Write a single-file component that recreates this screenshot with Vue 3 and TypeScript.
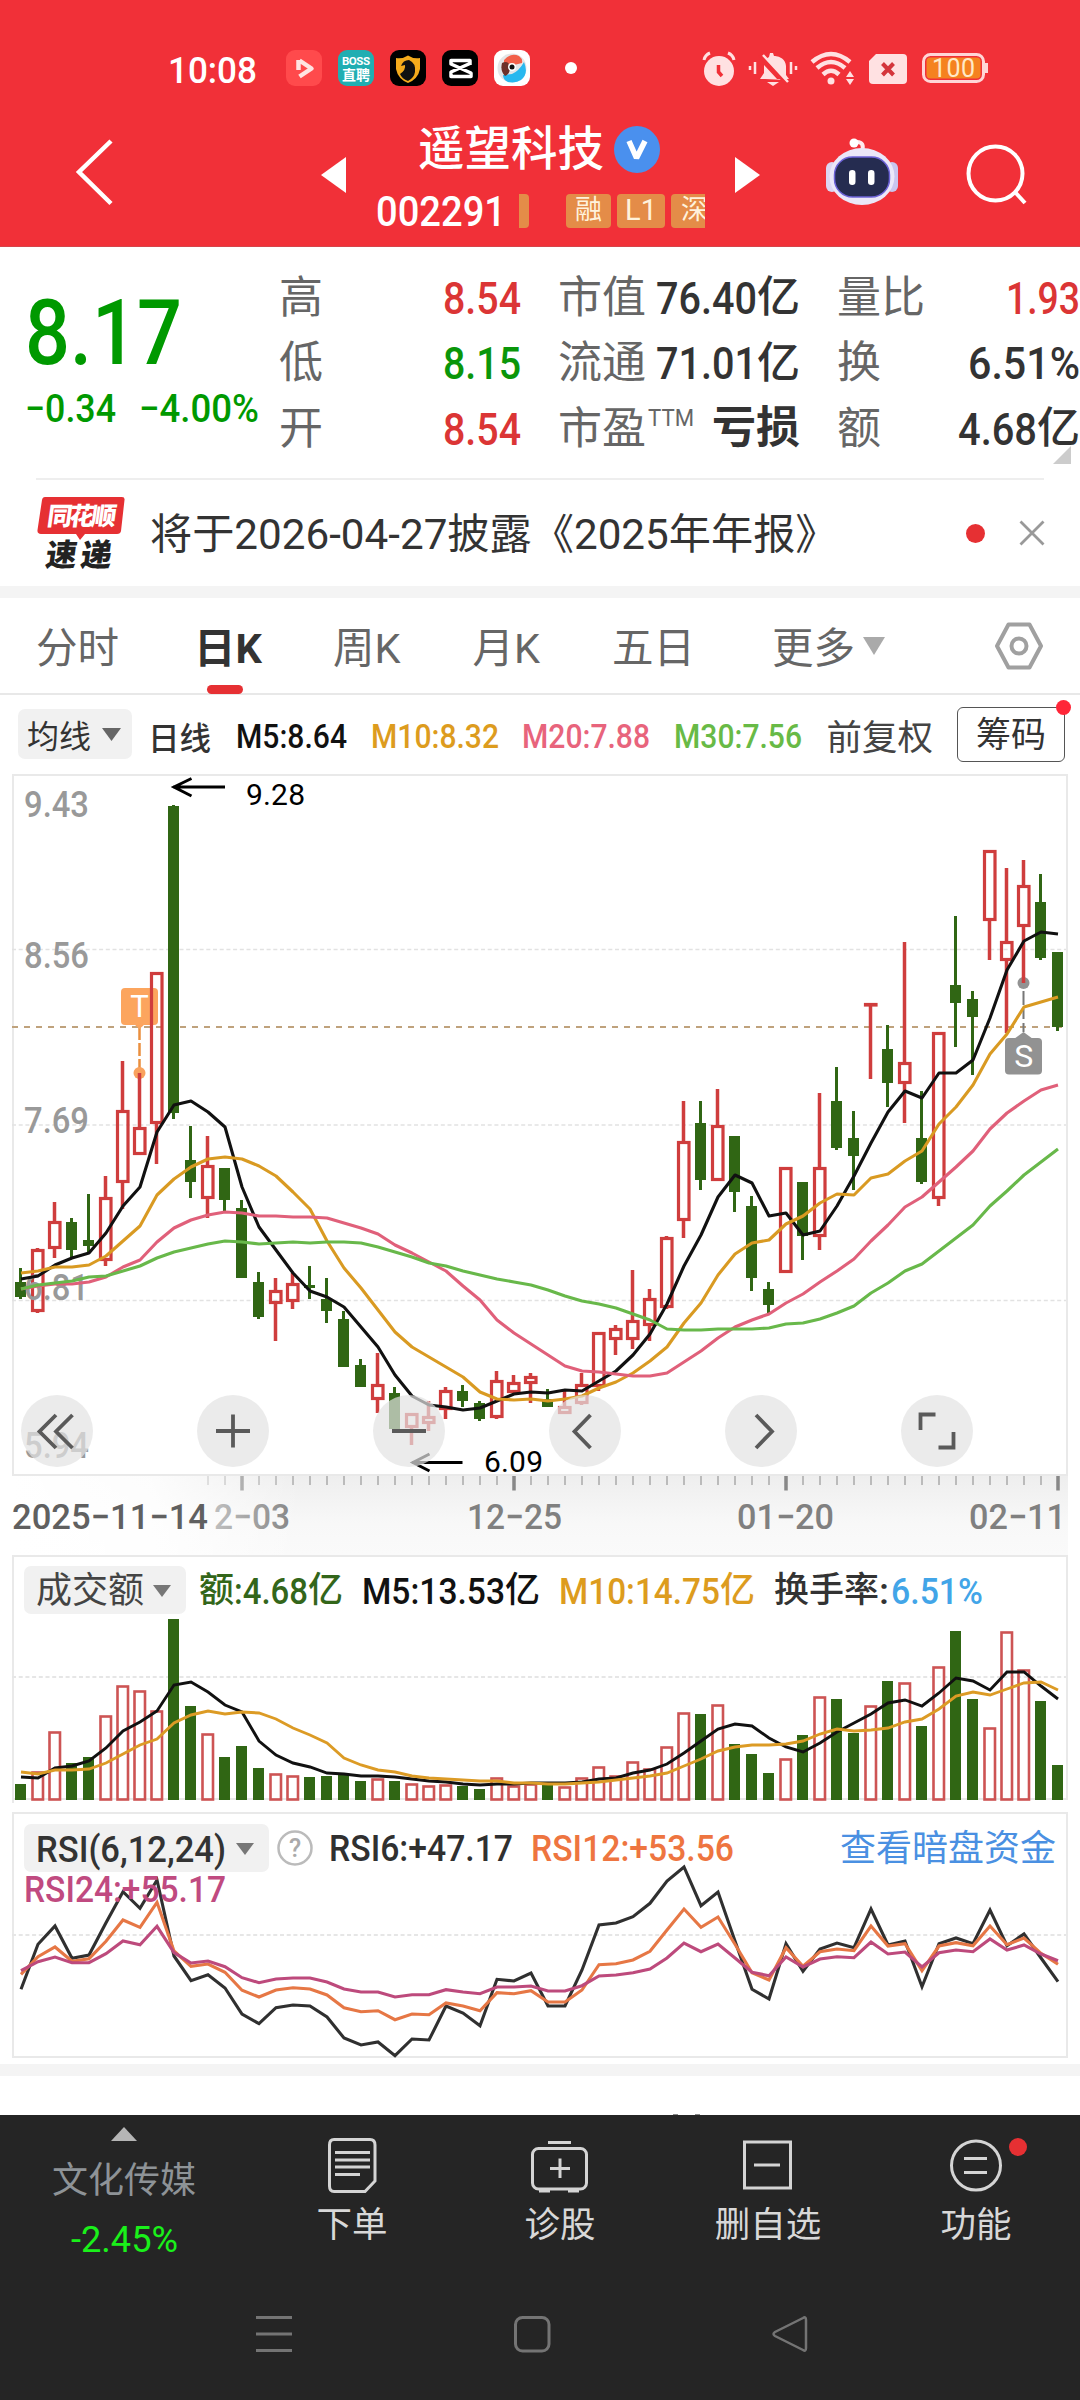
<script setup lang="ts">
import { h } from 'vue'
import type { FunctionalComponent } from 'vue'

/* Numeric text condensed to an exact width; the box height equals the cap height. */
const Num: FunctionalComponent<{ t: string; w: number; s: number }> = (p) =>
  h(
    'svg',
    { width: p.w, height: p.s * 0.71, style: 'display:block;overflow:visible;flex:none' },
    [
      h(
        'text',
        {
          x: 0,
          y: p.s * 0.71,
          'font-size': p.s,
          textLength: p.w,
          lengthAdjust: 'spacingAndGlyphs',
          fill: 'currentColor',
        },
        p.t,
      ),
    ],
  )
Num.props = ['t', 'w', 's']

type Candle = [string, number, number, number, number]
const candles: Candle[] = [
  ['g', 1268, 1282, 1297, 1299], ['r', 1248, 1249, 1312, 1313], ['r', 1202, 1221, 1249, 1258],
  ['g', 1218, 1222, 1250, 1257], ['g', 1194, 1240, 1246, 1252], ['r', 1176, 1197, 1261, 1266],
  ['r', 1061, 1110, 1183, 1209], ['r', 1073, 1127, 1155, 1155], ['r', 972, 972, 1124, 1164],
  ['g', 805, 806, 1113, 1119], ['g', 1126, 1160, 1182, 1198], ['r', 1136, 1165, 1199, 1218],
  ['g', 1168, 1168, 1200, 1211], ['g', 1200, 1208, 1278, 1278], ['g', 1272, 1282, 1317, 1319],
  ['r', 1278, 1290, 1304, 1341], ['r', 1273, 1283, 1302, 1309], ['g', 1266, 1285, 1288, 1299],
  ['g', 1278, 1299, 1311, 1323], ['g', 1311, 1319, 1367, 1367], ['g', 1359, 1365, 1387, 1387],
  ['r', 1353, 1384, 1400, 1413], ['g', 1387, 1393, 1429, 1429], ['r', 1413, 1413, 1428, 1445],
  ['r', 1401, 1416, 1424, 1431], ['r', 1387, 1390, 1410, 1419], ['g', 1385, 1391, 1401, 1407],
  ['g', 1401, 1403, 1419, 1421], ['r', 1371, 1380, 1418, 1419], ['r', 1375, 1382, 1393, 1393],
  ['r', 1373, 1376, 1384, 1403], ['g', 1389, 1399, 1407, 1407], ['r', 1391, 1406, 1414, 1414],
  ['r', 1373, 1384, 1404, 1405], ['r', 1332, 1332, 1387, 1391], ['r', 1325, 1328, 1340, 1355],
  ['r', 1270, 1320, 1340, 1349], ['r', 1289, 1298, 1326, 1341], ['r', 1236, 1237, 1308, 1309],
  ['r', 1101, 1141, 1221, 1238], ['g', 1101, 1123, 1180, 1190], ['r', 1089, 1125, 1181, 1181],
  ['g', 1136, 1136, 1192, 1212], ['g', 1196, 1206, 1278, 1291], ['g', 1282, 1289, 1305, 1313],
  ['r', 1167, 1167, 1273, 1273], ['g', 1182, 1182, 1236, 1260], ['r', 1093, 1167, 1237, 1250],
  ['g', 1067, 1101, 1148, 1150], ['g', 1111, 1138, 1156, 1190], ['r', 1003, 1003, 1006, 1079],
  ['g', 1025, 1049, 1083, 1107], ['r', 942, 1062, 1084, 1123], ['g', 1091, 1138, 1182, 1184],
  ['r', 1032, 1032, 1199, 1206], ['g', 916, 985, 1003, 1047], ['g', 991, 999, 1017, 1075],
  ['r', 850, 850, 921, 960], ['r', 868, 941, 961, 1033], ['r', 860, 885, 927, 983],
  ['g', 874, 902, 958, 960], ['g', 952, 952, 1027, 1031],
]

const ma5 = [1279, 1276, 1265, 1258, 1253, 1233, 1206, 1187, 1132, 1105, 1101, 1112, 1127, 1187, 1227, 1250, 1273, 1291, 1297, 1307, 1327, 1347, 1375, 1396, 1405, 1407, 1410, 1408, 1401, 1394, 1392, 1393, 1390, 1391, 1381, 1371, 1355, 1334, 1304, 1266, 1235, 1197, 1175, 1183, 1216, 1213, 1235, 1231, 1206, 1176, 1143, 1112, 1091, 1098, 1073, 1073, 1060, 1018, 970, 941, 932, 934]
const ma10 = [1273, 1271, 1267, 1267, 1265, 1256, 1241, 1226, 1195, 1179, 1167, 1159, 1157, 1159, 1166, 1176, 1192, 1209, 1241, 1268, 1288, 1310, 1332, 1347, 1357, 1367, 1377, 1392, 1399, 1400, 1399, 1401, 1399, 1396, 1388, 1382, 1373, 1361, 1347, 1323, 1303, 1275, 1254, 1243, 1240, 1224, 1216, 1203, 1194, 1195, 1178, 1174, 1161, 1151, 1124, 1107, 1085, 1054, 1034, 1007, 1002, 997]
const ma20 = [1289, 1286, 1284, 1284, 1282, 1277, 1267, 1260, 1242, 1228, 1220, 1215, 1212, 1213, 1216, 1216, 1217, 1217, 1218, 1223, 1228, 1234, 1245, 1253, 1262, 1271, 1286, 1300, 1320, 1333, 1344, 1355, 1366, 1371, 1372, 1374, 1376, 1376, 1373, 1362, 1351, 1338, 1327, 1320, 1314, 1303, 1294, 1282, 1271, 1259, 1241, 1225, 1207, 1197, 1182, 1167, 1151, 1129, 1113, 1101, 1090, 1085]
const ma30 = [1289, 1285, 1283, 1281, 1277, 1276, 1271, 1266, 1258, 1252, 1248, 1244, 1241, 1242, 1244, 1243, 1242, 1243, 1242, 1242, 1243, 1247, 1252, 1257, 1263, 1266, 1271, 1275, 1279, 1282, 1285, 1290, 1296, 1301, 1304, 1308, 1314, 1320, 1329, 1330, 1330, 1329, 1329, 1329, 1328, 1324, 1323, 1319, 1313, 1306, 1293, 1283, 1271, 1264, 1251, 1238, 1225, 1206, 1191, 1175, 1162, 1149]

const volTops = [1784, 1771, 1731, 1763, 1757, 1715, 1685, 1690, 1710, 1619, 1706, 1733, 1757, 1746, 1768, 1773, 1775, 1777, 1776, 1775, 1781, 1778, 1781, 1783, 1785, 1784, 1786, 1789, 1777, 1785, 1783, 1785, 1786, 1777, 1766, 1775, 1761, 1768, 1746, 1712, 1714, 1704, 1744, 1754, 1773, 1758, 1735, 1696, 1699, 1733, 1705, 1681, 1682, 1726, 1666, 1631, 1699, 1727, 1631, 1669, 1701, 1765]
const volMa5 = [1777, 1778, 1768, 1766, 1761, 1748, 1731, 1722, 1711, 1685, 1682, 1692, 1705, 1712, 1741, 1755, 1763, 1767, 1773, 1774, 1776, 1776, 1777, 1779, 1781, 1782, 1784, 1785, 1784, 1784, 1783, 1783, 1783, 1782, 1779, 1778, 1773, 1770, 1764, 1753, 1741, 1729, 1724, 1726, 1738, 1747, 1752, 1743, 1732, 1723, 1714, 1703, 1700, 1706, 1693, 1678, 1681, 1690, 1672, 1672, 1686, 1699]
const volMa10 = [1772, 1774, 1770, 1770, 1769, 1763, 1754, 1745, 1739, 1723, 1715, 1711, 1714, 1712, 1713, 1719, 1728, 1735, 1743, 1758, 1765, 1770, 1772, 1776, 1778, 1779, 1780, 1781, 1781, 1783, 1783, 1784, 1784, 1783, 1782, 1780, 1778, 1776, 1773, 1766, 1759, 1751, 1747, 1745, 1745, 1744, 1741, 1734, 1729, 1731, 1730, 1728, 1722, 1719, 1709, 1696, 1692, 1695, 1689, 1683, 1682, 1690]

/* RSI samples are in thirds of a pixel below the top of the panel area. */
const rsi6 = [568, 433, 378, 475, 465, 368, 275, 325, 240, 468, 542, 524, 564, 642, 671, 623, 615, 618, 651, 714, 735, 726, 767, 717, 720, 618, 639, 677, 538, 543, 519, 618, 618, 510, 375, 369, 350, 310, 243, 201, 317, 276, 423, 568, 597, 431, 514, 447, 429, 443, 327, 435, 423, 560, 431, 414, 431, 330, 437, 402, 474, 545]
const rsi12 = [523, 470, 441, 484, 476, 424, 360, 382, 307, 453, 499, 492, 517, 571, 591, 570, 563, 567, 585, 623, 635, 632, 659, 642, 644, 609, 618, 632, 578, 581, 572, 606, 606, 570, 494, 491, 480, 454, 390, 327, 382, 351, 433, 518, 540, 443, 499, 455, 447, 452, 378, 438, 431, 512, 438, 428, 437, 378, 434, 414, 460, 493]
const rsi24 = [512, 485, 471, 488, 488, 461, 423, 434, 379, 458, 489, 483, 500, 533, 548, 537, 534, 534, 546, 567, 576, 576, 591, 584, 584, 569, 576, 581, 561, 561, 558, 573, 573, 557, 528, 525, 518, 507, 474, 429, 455, 432, 474, 517, 527, 471, 501, 477, 470, 473, 426, 462, 456, 501, 458, 450, 455, 417, 450, 435, 462, 482]

const cx = (i: number) => 20.5 + 17 * i
const line = (ys: number[]) => ys.map((y, i) => `${cx(i) + 0.5},${y}`).join(' ')
const rsiLine = (ys: number[]) => line(ys.map((v) => +(1800 + v / 3).toFixed(1)))

const maLines = [
  { c: '#111', p: line(ma5) },
  { c: '#d99a22', p: line(ma10) },
  { c: '#e0607a', p: line(ma20) },
  { c: '#68b84a', p: line(ma30) },
]
const scale = [
  { t: '9.43', y: 817 },
  { t: '8.56', y: 968 },
  { t: '7.69', y: 1133 },
  { t: '6.81', y: 1300 },
  { t: '5.94', y: 1458 },
]
const ticks = Array.from({ length: 51 }, (_, k) => k + 11)
const isMajor = (i: number) => i === 13 || i === 29 || i === 45 || i === 61
const buttons = [
  { x: 57, d: 'M56 1415L39.500 1431.500L56 1448M72.500 1415L56 1431.500L72.500 1448' },
  { x: 233, d: 'M216 1431H250M233 1414.500V1447.500' },
  { x: 409, d: 'M392 1431H426' },
  { x: 585, d: 'M590.500 1415L574.500 1431.500L590.500 1448' },
  { x: 761, d: 'M756 1415L772 1431.500L756 1448' },
  { x: 937, d: 'M935.500 1414.500H920.500V1430M953.500 1432V1447.500H938.500' },
]
const maLegend = [
  { t: 'M5:8.64', w: 111, m: 24.5, c: '#111' },
  { t: 'M10:8.32', w: 128, m: 24, c: '#dd9c1e' },
  { t: 'M20:7.88', w: 128, m: 23.5, c: '#e8647c' },
  { t: 'M30:7.56', w: 128, m: 23.5, c: '#68ba46' },
]
</script>

<template>
  <div class="phone">
    <header class="top">
      <div class="status">
        <Num class="clock" t="10:08" :w="89" :s="37" />
        <svg class="apps" width="300" height="40" viewBox="284 48 300 40">
          <rect x="286" y="50" width="36" height="36" rx="9" fill="#ff4a4c" />
          <path d="M298.500 60V70M299.500 60.500L311.500 68.500L299.500 76.500" fill="none" stroke="#ffe4e2" stroke-width="4.500" stroke-linejoin="round" />
          <rect x="338" y="50" width="36" height="36" rx="9" fill="#20aeb2" />
          <text x="356" y="65" font-size="11.500" font-weight="700" fill="#fff" text-anchor="middle" textLength="28">BOSS</text>
          <text x="356" y="80" font-size="14" font-weight="700" fill="#fff" text-anchor="middle">直聘</text>
          <rect x="390" y="50" width="36" height="36" rx="9" fill="#000" />
          <path d="M396 58Q403 59 408 55.500Q413 59 420 58V69Q418 79 408 83Q398 79 396 69Z" fill="#f5ab1c" />
          <path d="M400 74Q406 70 405 65L401 66Q403 60 409 60Q416 63 415 72Q414 78 408 81Q402 79 400 74Z" fill="#111" />
          <rect x="442" y="50" width="36" height="36" rx="9" fill="#000" />
          <path d="M470 65V60.500H451V64L471 73V76.500H451V72L471 63" fill="none" stroke="#fff" stroke-width="3.500" stroke-linejoin="round" />
          <rect x="494" y="50" width="36" height="36" rx="9" fill="#fff" />
          <circle cx="512" cy="68" r="14.500" fill="#e3e6e8" />
          <path d="M504 60Q511 52 519 56Q523 59 522 63L514 65Q507 62 504 66Z" fill="#f2604a" />
          <path d="M524 62Q529 74 521 80Q516 83.500 508 82Q503 80 503 75L512 74Q519 71 524 62Z" fill="#28b8ef" />
          <path d="M502 63Q508 60 510 66Q511 73 505 76Q500 71 502 63Z" fill="#6d3029" />
          <circle cx="512" cy="67" r="4" fill="#fff" /><circle cx="512" cy="67" r="2.500" fill="#111" />
          <circle cx="571" cy="68" r="6" fill="#fff" />
        </svg>
        <svg class="sys" width="290" height="40" viewBox="700 48 290 40">
          <g fill="#ffe1e2" stroke="none">
            <circle cx="719" cy="71" r="15" />
            <path d="M765 79H789L786 75V66A11 11 0 0 0 774 56L773 53H770L769 57L766 59L786 80ZM760 79L764 73V65L777 79Z" />
            <path d="M767 82H779L773 86Z" />
            <circle cx="831" cy="81" r="3.500" />
            <path d="M846 77L850 71L854 77ZM846 79L850 85L854 79Z" />
            <path d="M876 54H903A4 4 0 0 1 907 58V80A4 4 0 0 1 903 84H873A4 4 0 0 1 869 80V61Z" />
          </g>
          <path d="M704 60Q705 55 710 53M728 53Q733 55 734 60" fill="none" stroke="#ffe1e2" stroke-width="3" />
          <path d="M718.500 65V72L722 76" fill="none" stroke="#f13038" stroke-width="3.500" />
          <path d="M760 55L787 84" stroke="#f13038" stroke-width="4" />
          <path d="M763 55L788 82M750 66V70M755 62V74M791 62V74M796 66V70" fill="none" stroke="#ffe1e2" stroke-width="2.500" />
          <path d="M812 62Q831 46 850 62M817 68Q831 56 845 68M823 74.500Q831 67 839 74.500" fill="none" stroke="#ffe1e2" stroke-width="4.500" />
          <path d="M882.500 63.500L893.500 75M893.500 63.500L882.500 75" stroke="#d4353c" stroke-width="4" />
          <rect x="923.500" y="54.500" width="60" height="27" rx="7" fill="none" stroke="#ffd5d6" stroke-width="3" />
          <rect x="926.500" y="57.500" width="54" height="21" rx="4" fill="#f58220" />
          <path d="M986.500 63V73" stroke="#ffd5d6" stroke-width="3" />
          <text x="953.500" y="77" font-size="25" fill="#ffe9c8" text-anchor="middle" textLength="43">100</text>
        </svg>
      </div>
      <div class="titlebar">
        <svg class="back" width="50" height="74" viewBox="70 135 50 74"><path d="M111 141L79 172L111 203.500" fill="none" stroke="#fff" stroke-width="4.500" /></svg>
        <svg class="prev" width="25" height="36" viewBox="0 0 25 36"><path d="M25 0V36L0 18Z" fill="#fff" /></svg>
        <div class="name">
          <div class="name-row">
            <span class="title">遥望科技</span>
            <svg width="46" height="47" viewBox="0 0 46 47"><ellipse cx="23" cy="23.500" rx="23" ry="23.500" fill="#4a90ee" /><path d="M15 15L22.500 32L31 15" fill="none" stroke="#fff" stroke-width="5.500" stroke-linejoin="bevel" /></svg>
          </div>
          <div class="code-row">
            <Num class="code" t="002291" :w="130" :s="42.5" />
            <span class="tag sliver"></span>
            <span class="tag rong">融</span>
            <span class="tag lv">L1</span>
            <span class="tag shen">深</span>
          </div>
        </div>
        <svg class="next" width="25" height="36" viewBox="0 0 25 36"><path d="M0 0V36L25 18Z" fill="#fff" /></svg>
        <svg class="robot" width="76" height="72" viewBox="823 136 76 72">
          <path d="M861 152Q864 142 856 142" fill="none" stroke="#ffe9ee" stroke-width="4" />
          <circle cx="853" cy="143" r="4.500" fill="#fff" />
          <rect x="825" y="162" width="12" height="30" rx="6" fill="#dcd6f2" /><rect x="885" y="162" width="12" height="30" rx="6" fill="#c9c5ee" />
          <ellipse cx="861" cy="176.500" rx="32.500" ry="28.500" fill="#ebe7f8" />
          <rect x="833.500" y="157" width="55" height="40" rx="18" fill="#252c50" stroke="#6d63d8" stroke-width="1.500" />
          <rect x="848" y="170" width="6.500" height="15" rx="3.200" fill="#fff" /><rect x="867" y="170" width="6.500" height="15" rx="3.200" fill="#fff" />
        </svg>
        <svg class="search" width="66" height="66" viewBox="963 142 66 66"><circle cx="994.500" cy="173.500" r="27" fill="none" stroke="#fff" stroke-width="4" /><path d="M1014 192L1024 203" stroke="#fff" stroke-width="4" /></svg>
      </div>
    </header>

    <section class="quote">
      <div class="price">
        <Num class="last" t="8.17" :w="157" :s="91" />
        <div class="chg"><Num t="−0.34" :w="91" :s="39" /><Num t="−4.00%" :w="120" :s="39" /></div>
      </div>
      <div class="col">
        <div class="cell"><span>高</span><Num class="v up" t="8.54" :w="78" :s="45" /></div>
        <div class="cell"><span>低</span><Num class="v down" t="8.15" :w="78" :s="45" /></div>
        <div class="cell"><span>开</span><Num class="v up" t="8.54" :w="78" :s="45" /></div>
      </div>
      <div class="col">
        <div class="cell"><span>市值</span><span class="vv"><Num class="v" t="76.40" :w="101" :s="45" /><b>亿</b></span></div>
        <div class="cell"><span>流通</span><span class="vv"><Num class="v" t="71.01" :w="101" :s="45" /><b>亿</b></span></div>
        <div class="cell"><span>市盈</span><Num class="ttm" t="TTM" :w="46" :s="24" /><b class="loss">亏损</b></div>
      </div>
      <div class="col">
        <div class="cell"><span>量比</span><Num class="v up" t="1.93" :w="74" :s="45" /></div>
        <div class="cell"><span>换</span><Num class="v" t="6.51%" :w="112" :s="45" /></div>
        <div class="cell"><span>额</span><span class="vv"><Num class="v" t="4.68" :w="79" :s="45" /><b>亿</b></span></div>
      </div>
      <svg class="corner" width="18" height="18"><path d="M18 0V18H0Z" fill="#ccc" /></svg>
    </section>

    <section class="news">
      <svg width="90" height="74" viewBox="36 495 90 74">
        <path d="M45 496H122Q125 496 124.500 499L121 530Q120.500 533 117 533H85L80 539L76 533H41Q37 533 37.500 529L42 499Q42.500 496 45 496Z" fill="#e63033" />
        <g transform="skewX(-8)"><text x="120" y="524" font-size="25" font-weight="900" fill="#fff" textLength="69">同花顺</text><text x="124" y="565" font-size="31" font-weight="900" fill="#222" textLength="66">速递</text></g>
      </svg>
      <span class="headline">将于2026-04-27披露《2025年年报》</span>
      <i class="dot"></i>
      <svg class="close" width="26" height="26"><path d="M1.500 1.500L24.500 24.500M24.500 1.500L1.500 24.500" stroke="#999" stroke-width="2.800" /></svg>
    </section>
    <div class="band"></div>

    <nav class="tabs">
      <span class="t1">分时</span><span class="t2 on">日K</span><span class="t3">周K</span><span class="t4">月K</span><span class="t5">五日</span><span class="t6">更多</span>
      <svg class="tri" width="22" height="18"><path d="M0 0H22L11 18Z" fill="#aaa" /></svg>
      <svg class="gear" width="50" height="48" viewBox="0 0 50 48"><path d="M14.500 2.500H35.500L47 24L35.500 45.500H14.500L3 24Z" fill="none" stroke="#a0a0a0" stroke-width="4" stroke-linejoin="round" /><circle cx="25" cy="24" r="7.500" fill="none" stroke="#a0a0a0" stroke-width="4" /></svg>
    </nav>

    <div class="ma">
      <span class="pick">均线<svg width="19" height="13"><path d="M0 0H19L9.500 13Z" fill="#666" /></svg></span>
      <span class="day">日线</span>
      <Num v-for="m in maLegend" :key="m.t" class="v m" :t="m.t" :w="m.w" :s="34" :style="{ color: m.c, marginLeft: m.m + 'px' }" />
      <span class="adj">前复权</span>
      <span class="chip">筹码<i></i></span>
    </div>

    <svg class="kline" width="1080" height="703" viewBox="0 773 1080 703">
      <rect x="13" y="775" width="1054" height="700" fill="#fff" stroke="#e9e9e9" stroke-width="2" />
      <path d="M12 949.500H1066M12 1125H1066M12 1300.500H1066" stroke="#e2e2e2" stroke-width="1.500" stroke-dasharray="4 2.700" />
      <path d="M12 1027H1066" stroke="#bfa27c" stroke-width="2" stroke-dasharray="6 6" />
      <path d="M139.500 1027V1073" stroke="#ea8f3e" stroke-width="2.500" stroke-dasharray="13 3" />
      <path d="M134 1024H145L139.500 1029Z" fill="#fba35c" />
      <rect x="121" y="988" width="37" height="37" rx="4" fill="#fca55e" />
      <path d="M1014 1039L1023.500 1032L1033 1039Z" fill="#929292" />
      <rect x="1005" y="1038" width="37" height="36.500" rx="4" fill="#929292" />
      <text x="139.500" y="1017" font-size="31" fill="#fff" text-anchor="middle">T</text>
      <text x="1023.800" y="1067" font-size="32" fill="#fff" text-anchor="middle">S</text>
      <circle cx="139.500" cy="1073" r="6" fill="#f9a25e" />
      <circle cx="1023.500" cy="983" r="6" fill="#929292" />
      <path d="M1023.500 991V1032" stroke="#777" stroke-width="2" stroke-dasharray="14 4 10 4" />
      <g v-for="(c, i) in candles" :key="i">
        <template v-if="c[0] === 'g'">
          <rect :x="cx(i) - 1.5" :y="c[1]" width="3" :height="c[4] - c[1]" fill="#306614" />
          <rect :x="cx(i) - 5.5" :y="c[2]" width="11" :height="c[3] - c[2]" fill="#306614" />
        </template>
        <template v-else>
          <path :d="`M${cx(i)} ${c[1]}V${c[2]}M${cx(i)} ${c[3]}V${c[4]}`" stroke="#cf3d3d" stroke-width="3.500" />
          <rect :x="cx(i) - 5" :y="c[2] + 1.5" width="10.500" :height="Math.max(0.5, c[3] - c[2] - 3)" fill="none" stroke="#cf3d3d" stroke-width="3.200" />
        </template>
      </g>
      <text v-for="s in scale" :key="s.t" x="24" :y="s.y" font-size="36" fill="#999" class="v" textLength="65" lengthAdjust="spacingAndGlyphs">{{ s.t }}</text>
      <polyline v-for="m in maLines" :key="m.c" :points="m.p" fill="none" :stroke="m.c" stroke-width="3.100" stroke-linejoin="round" />
      <path d="M173 787H225M191.500 778.500L174 787L191.500 796M412 1462.500H462.500M429.500 1454L413 1462.500L429.500 1471" fill="none" stroke="#000" stroke-width="3" />
      <text x="246" y="805" font-size="30" textLength="59">9.28</text>
      <text x="484" y="1472" font-size="30" textLength="59">6.09</text>
      <g v-for="b in buttons" :key="b.x">
        <circle :cx="b.x" cy="1431" r="36" fill="rgba(227,227,227,.7)" />
        <path :d="b.d" fill="none" stroke="#5a5a5a" stroke-width="3.800" />
      </g>
    </svg>

    <svg class="axis" width="1080" height="79" viewBox="0 1476 1080 79">
      <defs>
        <linearGradient id="shade" x1="0" x2="0" y1="0" y2="1"><stop offset="0" stop-color="#eee" /><stop offset=".6" stop-color="#f8f8f8" /><stop offset="1" stop-color="#fafafa" /></linearGradient>
        <linearGradient id="veil"><stop offset="0" stop-color="#fff" /><stop offset=".48" stop-color="#fff" stop-opacity=".85" /><stop offset="1" stop-color="#fff" stop-opacity="0" /></linearGradient>
      </defs>
      <rect x="12" y="1476" width="1056" height="79" fill="url(#shade)" />
      <rect v-for="i in ticks" :key="i" :x="cx(i) + 0.5 - (isMajor(i) ? 1.75 : 1)" y="1476" :width="isMajor(i) ? 3.5 : 2" :height="isMajor(i) ? 14.500 : 9" :fill="isMajor(i) ? '#888' : '#bbb'" />
      <g class="v" font-size="35.500" fill="#808080">
        <text x="214" y="1529" textLength="76" lengthAdjust="spacingAndGlyphs">2−03</text>
        <text x="467" y="1529" textLength="95" lengthAdjust="spacingAndGlyphs">12−25</text>
        <text x="737" y="1529" textLength="97" lengthAdjust="spacingAndGlyphs">01−20</text>
        <text x="969" y="1529" textLength="97" lengthAdjust="spacingAndGlyphs">02−11</text>
      </g>
      <rect x="12" y="1476" width="290" height="79" fill="url(#veil)" />
      <text class="v" x="12" y="1529" font-size="35.500" fill="#606060" textLength="196" lengthAdjust="spacingAndGlyphs">2025−11−14</text>
    </svg>

    <div class="panel vol">
      <svg width="1080" height="248" viewBox="0 1555 1080 248">
        <path d="M13 1803V1556H1067V1799M12 1799H1068" fill="none" stroke="#e9e9e9" stroke-width="2" />
        <path d="M12 1677H1066" stroke="#e6e6e6" stroke-width="2" stroke-dasharray="4 2.700" />
        <g v-for="(y, i) in volTops" :key="i">
          <rect v-if="candles[i][0] === 'g'" :x="cx(i) - 5.500" :y="y" width="11" :height="1800 - y" fill="#306614" />
          <rect v-else :x="cx(i) - 5" :y="y + 1.500" width="10.500" :height="1798 - y" fill="none" stroke="#cd5454" stroke-width="2.600" />
        </g>
        <polyline :points="line(volMa5)" fill="none" stroke="#111" stroke-width="2.900" />
        <polyline :points="line(volMa10)" fill="none" stroke="#dc9b25" stroke-width="2.900" />
      </svg>
      <div class="legend">
        <span class="drop w1">成交额<svg width="18" height="12"><path d="M0 0H18L9 12Z" fill="#777" /></svg></span>
        <span class="seg green">额<Num t=":4.68" :w="74" :s="36" />亿</span>
        <span class="seg black"><Num t="M5:13.53" :w="143" :s="36" />亿</span>
        <span class="seg gold"><Num t="M10:14.75" :w="161" :s="36" />亿</span>
        <span class="seg dark">换手率<Num t=":" :w="10" :s="36" /><Num class="blue" t="6.51%" :w="92" :s="36" /></span>
      </div>
    </div>

    <div class="panel rsi">
      <svg width="1080" height="261" viewBox="0 1803 1080 261">
        <rect x="13" y="1813" width="1054" height="244" fill="none" stroke="#e9e9e9" stroke-width="2" />
        <path d="M12 1935H1066" stroke="#e6e6e6" stroke-width="2" stroke-dasharray="4 2.700" />
        <polyline :points="rsiLine(rsi6)" fill="none" stroke="#303030" stroke-width="3.100" />
        <polyline :points="rsiLine(rsi12)" fill="none" stroke="#e67745" stroke-width="3.100" />
        <polyline :points="rsiLine(rsi24)" fill="none" stroke="#bd4a7c" stroke-width="3.100" />
      </svg>
      <div class="legend">
        <span class="drop w2"><Num t="RSI(6,12,24)" :w="190" :s="37" /><svg width="18" height="12"><path d="M0 0H18L9 12Z" fill="#777" /></svg></span>
        <svg class="help" width="36" height="36"><circle cx="18" cy="18" r="16.500" fill="none" stroke="#bbb" stroke-width="2.500" /><text x="18" y="27" font-size="25" fill="#aaa" text-anchor="middle">?</text></svg>
        <Num class="v r6" t="RSI6:+47.17" :w="184" :s="37" />
        <Num class="v r12" t="RSI12:+53.56" :w="203" :s="37" />
        <span class="link">查看暗盘资金</span>
      </div>
      <Num class="v r24" t="RSI24:+55.17" :w="202" :s="36" />
    </div>
    <div class="band"></div>
    <div class="peek"><i></i><i></i></div>

    <footer class="bottom">
      <div class="sector">
        <svg width="26" height="14"><path d="M13 0L26 14H0Z" fill="#b5b5b5" /></svg>
        <span class="sname">文化传媒</span>
        <Num class="spct" t="-2.45%" :w="107" :s="36" />
      </div>
      <div class="act">
        <svg width="60" height="60" viewBox="322 2135 60 60"><path d="M334 2139.500H370Q375 2139.500 375 2145V2181L365 2191.500H334Q329.500 2191.500 329.500 2186V2145Q329.500 2139.500 334 2139.500ZM335 2152.500H370M335 2160H370M335 2167H370M335 2174.500H360" /></svg>
        <span>下单</span>
      </div>
      <div class="act">
        <svg width="60" height="60" viewBox="530 2135 60 60"><rect x="532.500" y="2148.500" width="54" height="40.500" rx="6" /><path d="M548 2142.500H571M560 2158.500V2178M550 2168.500H570M539 2191H550M568 2191H579" /></svg>
        <span>诊股</span>
      </div>
      <div class="act">
        <svg width="60" height="60" viewBox="738 2135 60 60"><path d="M744.500 2142H790.500V2188H744.500ZM754 2165H780" /></svg>
        <span>删自选</span>
      </div>
      <div class="act">
        <svg width="60" height="60" viewBox="946 2135 60 60"><circle cx="976" cy="2165.500" r="24.500" /><path d="M964 2158.500H987M964 2172.500H987" /></svg>
        <span>功能</span><i class="badge"></i>
      </div>
    </footer>
    <div class="sysnav">
      <svg width="1080" height="60" viewBox="0 2304 1080 60" fill="none" stroke="#747474" stroke-width="3">
        <path d="M256 2317.500H292M256 2334H292M256 2350.500H292" />
        <rect x="515.500" y="2317.500" width="33.500" height="33.500" rx="7" />
        <path d="M803 2318Q806 2316 806 2320V2348Q806 2352 803 2350L775 2336Q772 2334 775 2332Z" stroke-width="2.500" />
      </svg>
    </div>
  </div>
</template>

<style>
html, body { margin: 0; background: #fff; }
</style>

<style scoped>
.phone { width: 1080px; height: 2400px; overflow: hidden; background: #fff; font-family: Roboto, "Noto Sans CJK SC", sans-serif; color: #333; display: flex; flex-direction: column; }
.phone > * { flex: none; }
svg { flex: none; display: block; }
span { white-space: nowrap; }
.v { font-weight: 500; }
.top { height: 247px; box-sizing: border-box; background: #f13038; border-bottom: 1px solid #d5444a; color: #fff; }
.status { height: 118px; display: flex; padding: 48px 0 0 168px; box-sizing: border-box; }
.clock { margin-top: 9px; font-weight: 500; }
.apps { margin-left: 27px; }
.sys { margin-left: 116px; }
.titlebar { display: flex; align-items: flex-start; }
.back { margin: 17px 0 0 70px; }
.prev { margin: 39px 0 0 201px; }
.name { width: 389px; }
.name-row { display: flex; height: 62px; align-items: center; padding-left: 72px; }
.title { font-size: 46.500px; font-weight: 500; line-height: 60px; margin-right: 10px; }
.code-row { display: flex; align-items: center; height: 34px; margin-top: 14px; padding-left: 30px; }
.code { font-weight: 500; }
.tag { box-sizing: border-box; height: 34px; line-height: 32px; border-radius: 4px; background: #e48c48; color: #fff2dc; font-size: 27px; text-align: center; overflow: hidden; }
.sliver { width: 10px; margin-left: 13px; border-radius: 0 4px 4px 0; }
.rong { width: 45px; margin-left: 37px; }
.lv { width: 48px; margin-left: 6px; font-family: Roboto, sans-serif; font-size: 29px; }
.shen { width: 34px; margin-left: 6px; padding-left: 10px; text-align: left; border-radius: 4px 0 0 4px; }
.next { margin-top: 39px; }
.robot { margin: 18px 0 0 64px; }
.search { margin: 24px 0 0 64px; }

.quote { height: 231px; box-sizing: border-box; padding-top: 17px; display: flex; position: relative; }
.price { width: 279px; padding-left: 25px; box-sizing: border-box; color: #009900; }
.last { margin-top: 35px; font-weight: 500; }
.chg { display: flex; gap: 23px; margin-top: 30px; font-weight: 500; }
.col { width: 242px; margin-right: 37px; }
.col:nth-child(4) { width: 243px; margin-right: 0; }
.cell { height: 65.500px; display: flex; align-items: center; justify-content: space-between; font-size: 44px; line-height: 60px; color: #666; }
.cell > span:first-child { padding-top: 2px; }
.cell .v { color: #333; margin-top: 2px; }
.cell b { color: #333; font-weight: 500; font-size: 43px; padding-top: 1px; }
.cell .up { color: #db3535; }
.cell .down { color: #0a960a; }
.vv { display: flex; align-items: center; }
.cell .ttm { margin: -20px 0 0 2px; }
.cell .loss { font-weight: 700; margin-left: auto; font-size: 44px; }
.corner { position: absolute; right: 9px; bottom: 14px; }

.news { height: 108px; margin: 0 36px; box-sizing: border-box; border-top: 2px solid #eee; display: flex; align-items: center; }
.headline { font-size: 42.200px; margin-left: 24px; line-height: 60px; padding-top: 3px; }
.dot { width: 19px; height: 19px; border-radius: 50%; background: #e63033; margin-left: auto; }
.close { margin-left: 34px; margin-right: -1px; }
.band { height: 12px; background: #f4f4f4; }

.tabs { height: 97px; box-sizing: border-box; border-bottom: 2px solid #e8e8e8; display: flex; align-items: center; font-size: 41.500px; color: #666; }
.tabs span { margin-top: -2px; }
.t1 { margin-left: 36px; }
.t2 { position: relative; margin-left: 75px; color: #333; font-weight: 700; }
.t2::after { content: ''; position: absolute; left: 13px; bottom: -19px; width: 36px; height: 9px; border-radius: 5px; background: #e63033; }
.t3 { margin-left: 71px; }
.t4 { margin-left: 72px; }
.t5 { margin-left: 72px; }
.t6 { margin-left: 77px; }
.tri { margin-left: 8px; }
.gear { margin-left: 109px; }

.ma { height: 78px; display: flex; align-items: center; }
.pick { width: 114px; height: 50px; margin: 0 0 0 18px; box-sizing: border-box; padding-left: 9px; border-radius: 7px; background: #f1f1f1; display: flex; align-items: center; font-size: 32px; gap: 11px; }
.day { font-size: 31.500px; font-weight: 500; margin: 3px 0 0 16px; }
.m { margin-top: 5px; }
.adj { font-size: 35.500px; margin-left: 25px; color: #444; }
.chip { position: relative; width: 108px; height: 55px; box-sizing: border-box; border: 1.500px solid #555; border-radius: 6px; margin-left: 24px; font-size: 35px; line-height: 56px; text-align: center; }
.chip i { position: absolute; right: -7px; top: -8px; width: 15px; height: 15px; border-radius: 50%; background: #ff2638; }

.panel { position: relative; }
.legend { position: absolute; left: 24px; top: 11px; width: 1032px; height: 48px; display: flex; align-items: center; font-size: 35px; line-height: 48px; font-weight: 500; }
.drop { height: 48px; box-sizing: border-box; padding: 0 15px 0 12px; background: #f1f1f1; border-radius: 7px; display: flex; align-items: center; justify-content: space-between; color: #444; }
.w1 { width: 162px; font-weight: 400; font-size: 36px; padding-top: 1px; }
.w2 { width: 245px; color: #333; padding-top: 2px; }
.seg { display: flex; align-items: center; margin-left: 19px; padding-top: 2px; }
.green { color: #33661a; margin-left: 13px; }
.black { color: #111; }
.gold { color: #dd9c1e; }
.dark { color: #333; }
.blue { color: #42a5e8; margin-left: 2px; }
.rsi .legend { top: 21px; }
.help { margin-left: 8px; }
.r6 { margin-left: 16px; color: #303030; }
.r12 { margin-left: 18px; color: #ee7540; }
.link { margin-left: auto; font-size: 36px; color: #4a90e2; font-weight: 400; padding-top: 2px; }
.r24 { position: absolute; left: 24px; top: 73px; color: #c04a80; }

.peek { height: 39px; display: flex; align-items: flex-end; padding-left: 673px; gap: 17px; }
.peek i { width: 5px; height: 1px; background: #888; }

.bottom { height: 189px; background: #252525; display: flex; color: #d8d8d8; }
.sector { width: 248px; display: flex; flex-direction: column; align-items: center; padding-top: 12px; box-sizing: border-box; }
.sname { font-size: 36px; line-height: 50px; margin-top: 15px; color: #8e9397; }
.spct { color: #1af01a; margin-top: 20px; }
.act { width: 208px; position: relative; display: flex; flex-direction: column; align-items: center; padding-top: 20px; box-sizing: border-box; font-size: 35.500px; line-height: 50px; }
.act svg { fill: none; stroke: #d4d4d4; stroke-width: 3; }
.act span { margin-top: 5px; }
.badge { position: absolute; left: 137px; top: 23px; width: 18px; height: 18px; border-radius: 50%; background: #e63033; }
.sysnav { height: 96px; background: #252525; }
</style>
